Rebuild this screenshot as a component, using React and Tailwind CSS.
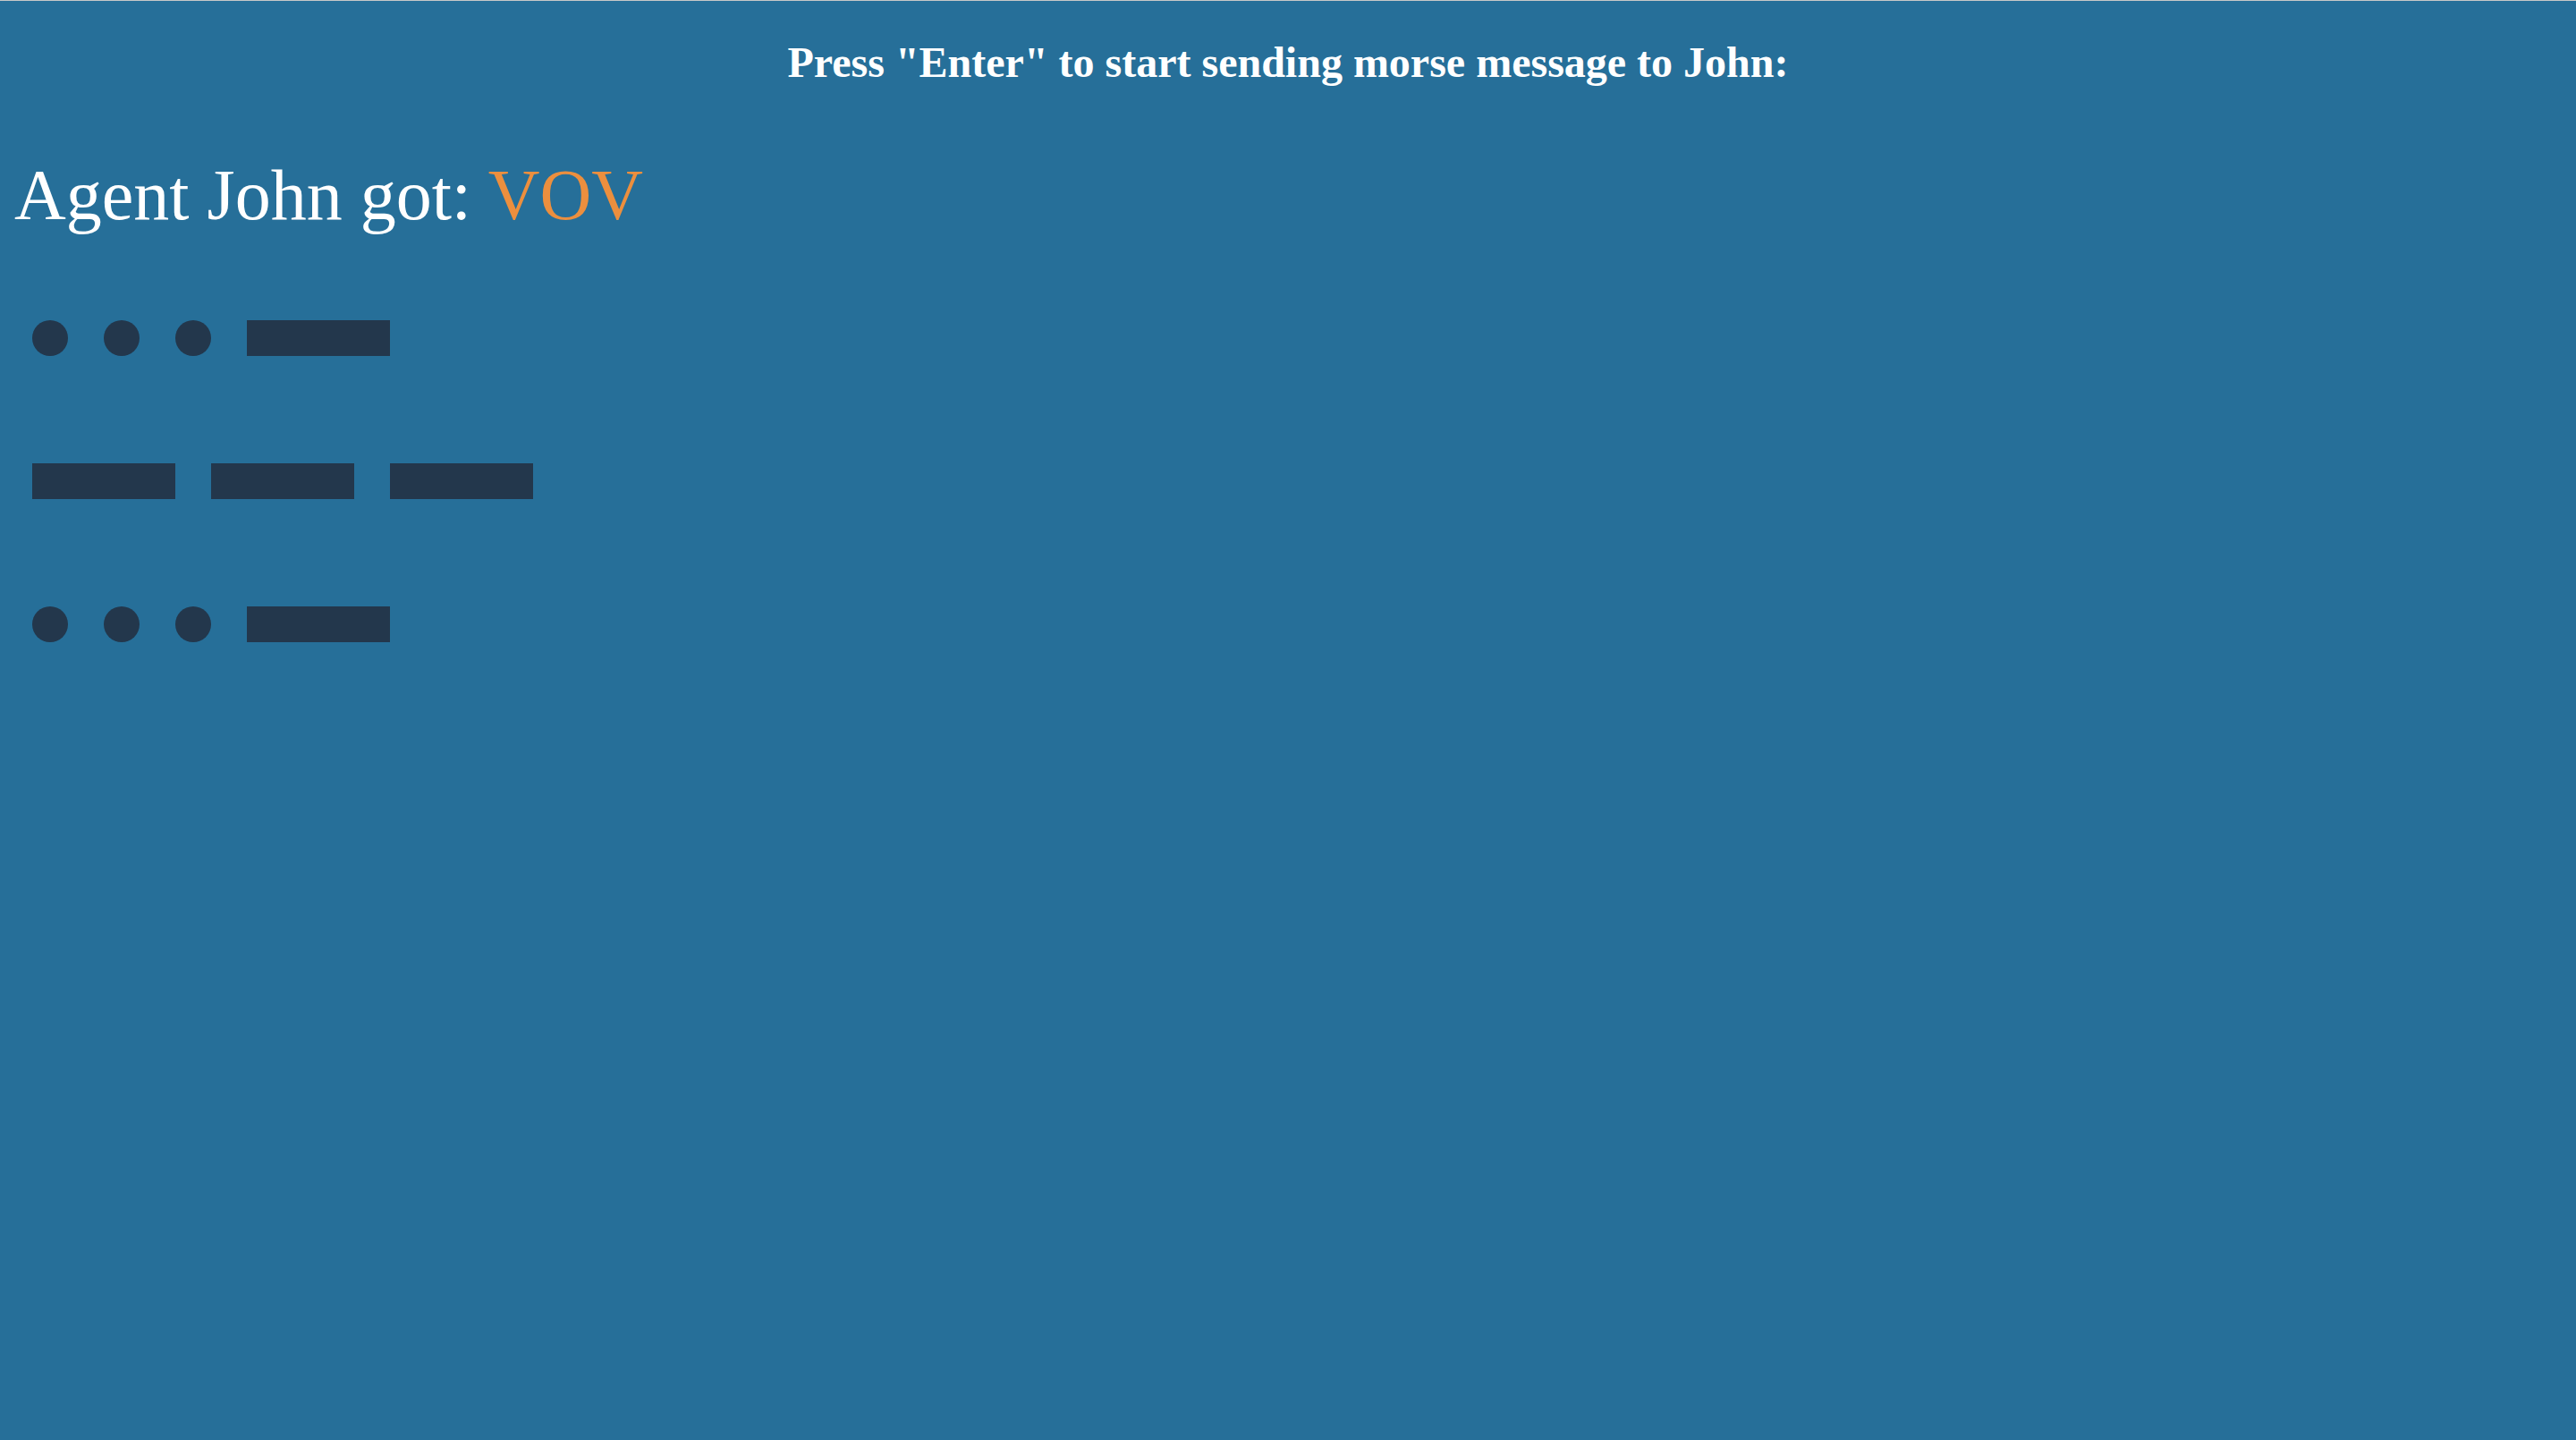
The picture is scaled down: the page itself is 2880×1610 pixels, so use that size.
import React from 'react';

// Morse code for each received letter
const MORSE = {
  V: '...-',
  O: '---',
};

const message = 'VOV';

const Symbol = ({ type }) =>
  type === '.' ? (
    <span className="block w-[40px] h-[40px] rounded-full bg-[#23374c]" />
  ) : (
    <span className="block w-[160px] h-[40px] bg-[#23374c]" />
  );

const App = () => {
  return (
    <div
      className="min-h-[1610px] w-full bg-[#266f99] border-t border-[#c8c8c8] overflow-hidden"
      style={{ fontFamily: '"Liberation Serif", "Times New Roman", serif' }}
    >
      <h2 className="mt-[45px] text-center text-[48px] font-bold leading-none text-white">
        Press "Enter" to start sending morse message to John:
      </h2>

      <h1 className="mt-[84px] ml-[16px] text-[80px] leading-none text-white">
        Agent John got: <span className="text-[#ec8f3e]">{message}</span>
      </h1>

      {/* One row of dots and dashes per letter */}
      <div className="mt-[100px] ml-[36px] flex flex-col gap-[120px]">
        {message.split('').map((letter, i) => (
          <div key={i} className="flex items-center gap-[40px]">
            {MORSE[letter].split('').map((s, j) => (
              <Symbol key={j} type={s} />
            ))}
          </div>
        ))}
      </div>
    </div>
  );
};

export default App;
